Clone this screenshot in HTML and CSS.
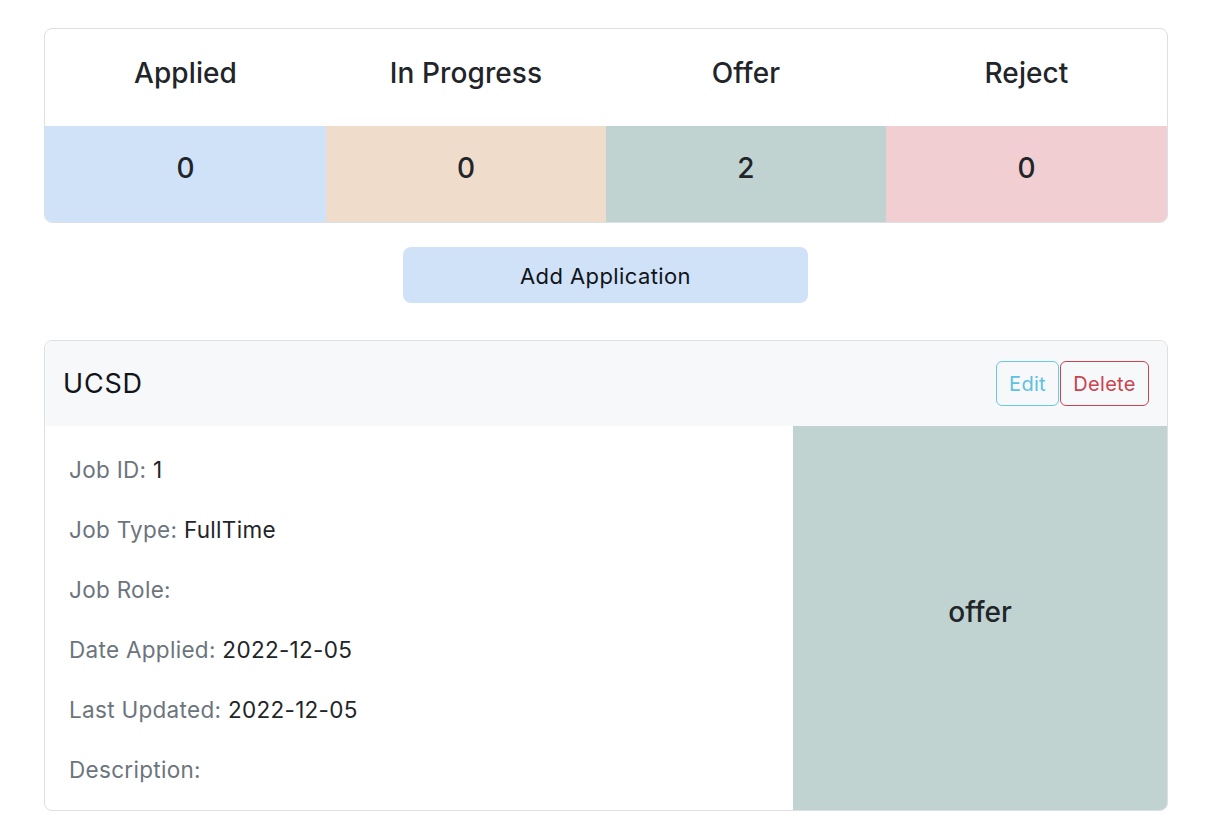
FILE: index.html
```html
<!DOCTYPE html>
<html lang="en">
<head>
<meta charset="utf-8">
<title>Applications</title>
<link rel="stylesheet" href="styles.css">
</head>
<body>
<div class="page">
  <section class="summary">
    <div class="sum-head">Applied</div>
    <div class="sum-head">In Progress</div>
    <div class="sum-head">Offer</div>
    <div class="sum-head">Reject</div>
    <div class="sum-num applied">0</div>
    <div class="sum-num progress">0</div>
    <div class="sum-num offer">2</div>
    <div class="sum-num reject">0</div>
  </section>

  <div class="add-row">
    <button class="add-btn">Add Application</button>
  </div>

  <section class="job-card">
    <header class="job-head">
      <h2 class="job-title">UCSD</h2>
      <div class="job-actions">
        <button class="btn btn-edit">Edit</button>
        <button class="btn btn-delete">Delete</button>
      </div>
    </header>
    <div class="job-body">
      <div class="job-info">
        <div class="row"><span class="lbl">Job ID:</span> <span class="val">1</span></div>
        <div class="row"><span class="lbl">Job Type:</span> <span class="val">FullTime</span></div>
        <div class="row"><span class="lbl">Job Role:</span> <span class="val"></span></div>
        <div class="row"><span class="lbl">Date Applied:</span> <span class="val">2022-12-05</span></div>
        <div class="row"><span class="lbl">Last Updated:</span> <span class="val">2022-12-05</span></div>
        <div class="row"><span class="lbl">Description:</span> <span class="val"></span></div>
      </div>
      <div class="job-status">offer</div>
    </div>
  </section>
</div>
</body>
</html>
```

FILE: styles.css
```css
* { box-sizing: border-box; }

html, body {
  margin: 0;
  padding: 0;
  background: #ffffff;
}

body {
  font-family: Inter, "Noto Sans", "Liberation Sans", sans-serif;
  color: #212529;
}

.page {
  width: 1124px;
  margin-left: 44px;
  padding-top: 28px;
}

.summary {
  display: grid;
  grid-template-columns: 281px 280px 280px 281px;
  grid-template-rows: 97px 96px;
  border: 1px solid #dcdfe3;
  border-radius: 8px;
  overflow: hidden;
}

.sum-head,
.sum-num {
  display: flex;
  align-items: center;
  justify-content: center;
  font-size: 28px;
  font-weight: 500;
  color: #212529;
  letter-spacing: 0.1px;
}

.sum-head { padding-bottom: 9px; }
.sum-num { padding-bottom: 12px; }

.applied { background: #d0e2f8; }
.progress { background: #f0dcca; }
.offer { background: #c0d3d1; }
.reject { background: #f0ced2; }

.add-row {
  display: flex;
  justify-content: center;
  padding-top: 24px;
  padding-bottom: 37px;
}

.add-btn {
  width: 405px;
  height: 56px;
  margin-left: -1px;
  border: none;
  border-radius: 8px;
  background: #d0e2f8;
  color: #111418;
  font-family: Inter, "Noto Sans", "Liberation Sans", sans-serif;
  font-size: 22px;
  font-weight: 400;
  letter-spacing: 0.4px;
  padding: 2px 0 0 0;
}

.job-card {
  border: 1px solid #dcdfe3;
  border-radius: 8px;
  overflow: hidden;
}

.job-head {
  display: flex;
  align-items: center;
  justify-content: space-between;
  height: 85px;
  padding: 0 18px 0 18px;
  background: #f7f8fa;
}

.job-title {
  margin: 0;
  font-size: 27px;
  font-weight: 400;
  letter-spacing: 0.8px;
  color: #111418;
}

.job-actions {
  display: flex;
  gap: 1px;
}

.btn {
  height: 45px;
  border-radius: 6px;
  background: transparent;
  font-family: Inter, "Noto Sans", "Liberation Sans", sans-serif;
  font-size: 20px;
  font-weight: 400;
  letter-spacing: 0.3px;
  padding: 0;
}

.btn-edit {
  width: 63px;
  border: 1px solid #6cc7e3;
  color: #5ec1e1;
}

.btn-delete {
  width: 89px;
  border: 1px solid #c9444f;
  color: #c9444f;
}

.job-body {
  display: flex;
  height: 384px;
}

.job-info {
  width: 748px;
  padding: 14px 0 0 24px;
}

.row {
  height: 60px;
  line-height: 60px;
  font-size: 22.5px;
  letter-spacing: 0.3px;
}

.lbl { color: #6c757d; }
.val { color: #212529; }

.job-status {
  flex: 1;
  display: flex;
  align-items: center;
  justify-content: center;
  background: #c0d3d1;
  font-size: 28px;
  font-weight: 500;
  color: #212529;
  padding-bottom: 12px;
}
```
